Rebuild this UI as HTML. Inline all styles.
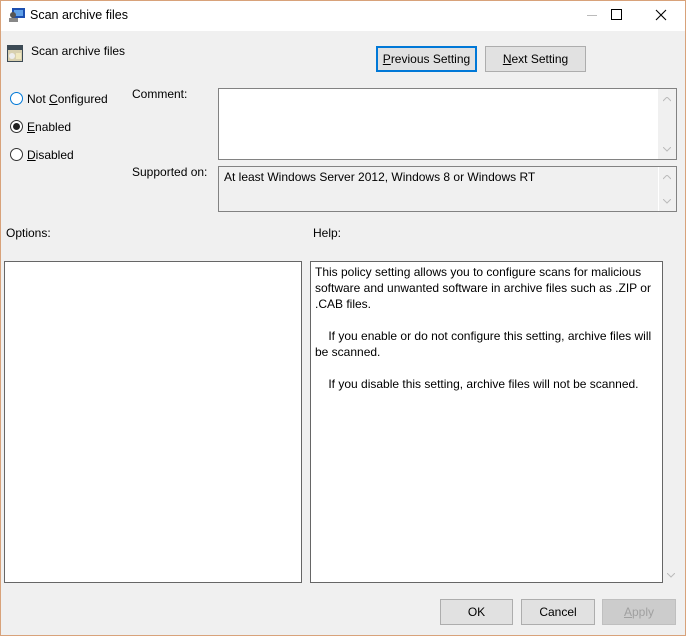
<!DOCTYPE html>
<html><head><style>
*{margin:0;padding:0;box-sizing:border-box}
body{width:686px;height:636px;background:#f0f0f0;font-family:"Liberation Sans",sans-serif;font-size:12px;color:#000;position:relative;overflow:hidden}
.frame{position:absolute;left:0;top:0;width:686px;height:636px;border:1px solid #d8a27a;pointer-events:none}
.title{position:absolute;left:1px;top:1px;width:684px;height:30px;background:#fff}
.a{position:absolute;white-space:nowrap}
.btn{position:absolute;background:#e1e1e1;border:1px solid #adadad;text-align:center;line-height:24px}
.box{position:absolute;border:1px solid #828282;background:#fff}
.radio{position:absolute;width:13px;height:13px;border:1px solid #333;border-radius:50%;background:#fff}
u{text-decoration:underline}
</style></head><body>
<div class="title"></div>
<svg class="a" style="left:8px;top:7px" width="18" height="16"><rect x="4" y="1" width="13" height="10" fill="#1c4fb0"/><rect x="6" y="3" width="9" height="6" fill="#5fa0e8"/><circle cx="5" cy="8" r="3" fill="#555"/><rect x="1" y="11" width="9" height="4" fill="#888"/></svg>
<div class="a" style="left:30px;top:8px;font-size:12.5px">Scan archive files</div>
<div class="a" style="left:587px;top:15px;width:10px;height:1px;background:#bbb"></div>
<div class="a" style="left:611px;top:9px;width:11px;height:11px;border:1px solid #000"></div>
<svg class="a" style="left:655px;top:9px" width="12" height="12"><path d="M1 1L11 11M11 1L1 11" stroke="#000" stroke-width="1.1"/></svg>
<svg class="a" style="left:7px;top:45px" width="16" height="17"><rect x="0" y="0" width="16" height="17" fill="#3c4a55"/><rect x="1" y="5" width="14" height="11" fill="#d8d0b0"/><circle cx="5" cy="11" r="3" fill="#eee"/><rect x="9" y="8" width="5" height="6" fill="#f0e8c0"/></svg>
<div class="a" style="left:31px;top:44px">Scan archive files</div>
<div class="btn" style="left:376px;top:46px;width:101px;height:26px;border:2px solid #0078d7;line-height:22px"><u>P</u>revious Setting</div>
<div class="btn" style="left:485px;top:46px;width:101px;height:26px"><u>N</u>ext Setting</div>
<div class="radio" style="left:10px;top:92px;border-color:#0078d7"></div>
<div class="a" style="left:27px;top:92px">Not <u>C</u>onfigured</div>
<div class="radio" style="left:10px;top:120px"></div>
<div class="a" style="left:13px;top:123px;width:7px;height:7px;border-radius:50%;background:#222"></div>
<div class="a" style="left:27px;top:120px"><u>E</u>nabled</div>
<div class="radio" style="left:10px;top:148px"></div>
<div class="a" style="left:27px;top:148px"><u>D</u>isabled</div>
<div class="a" style="left:132px;top:87px">Comment:</div>
<div class="box" style="left:218px;top:88px;width:459px;height:72px"></div>
<div class="a" style="left:658px;top:89px;width:18px;height:70px;background:#f0f0f0"></div>
<svg class="a" style="left:663px;top:97px" width="8" height="5"><path d="M0 4L4 0L8 4" stroke="#bbb" fill="none"/></svg>
<svg class="a" style="left:663px;top:147px" width="8" height="5"><path d="M0 0L4 4L8 0" stroke="#bbb" fill="none"/></svg>
<div class="a" style="left:132px;top:165px">Supported on:</div>
<div class="box" style="left:218px;top:166px;width:459px;height:46px;background:#f0f0f0"></div>
<div class="a" style="left:658px;top:167px;width:1px;height:44px;background:#fff"></div>
<svg class="a" style="left:663px;top:175px" width="8" height="5"><path d="M0 4L4 0L8 4" stroke="#bbb" fill="none"/></svg>
<svg class="a" style="left:663px;top:199px" width="8" height="5"><path d="M0 0L4 4L8 0" stroke="#bbb" fill="none"/></svg>
<div class="a" style="left:224px;top:170px">At least Windows Server 2012, Windows 8 or Windows RT</div>
<div class="a" style="left:6px;top:226px">Options:</div>
<div class="a" style="left:313px;top:226px">Help:</div>
<div class="box" style="left:4px;top:261px;width:298px;height:322px;border-color:#666"></div>
<div class="box" style="left:310px;top:261px;width:353px;height:322px;border-color:#666"></div>
<svg class="a" style="left:667px;top:573px" width="8" height="5"><path d="M0 0L4 4L8 0" stroke="#bbb" fill="none"/></svg>
<div class="a" style="left:315px;top:264px;line-height:16px;white-space:normal;width:345px">This policy setting allows you to configure scans for malicious software and unwanted software in archive files such as .ZIP or .CAB files.<br><br>&nbsp;&nbsp;&nbsp;&nbsp;If you enable or do not configure this setting, archive files will be scanned.<br><br>&nbsp;&nbsp;&nbsp;&nbsp;If you disable this setting, archive files will not be scanned.</div>
<div class="btn" style="left:440px;top:599px;width:73px;height:26px">OK</div>
<div class="btn" style="left:521px;top:599px;width:74px;height:26px">Cancel</div>
<div class="btn" style="left:602px;top:599px;width:74px;height:26px;background:#ccc;border-color:#bfbfbf;color:#a0a0a0"><u>A</u>pply</div>
<div class="frame"></div>
</body></html>
